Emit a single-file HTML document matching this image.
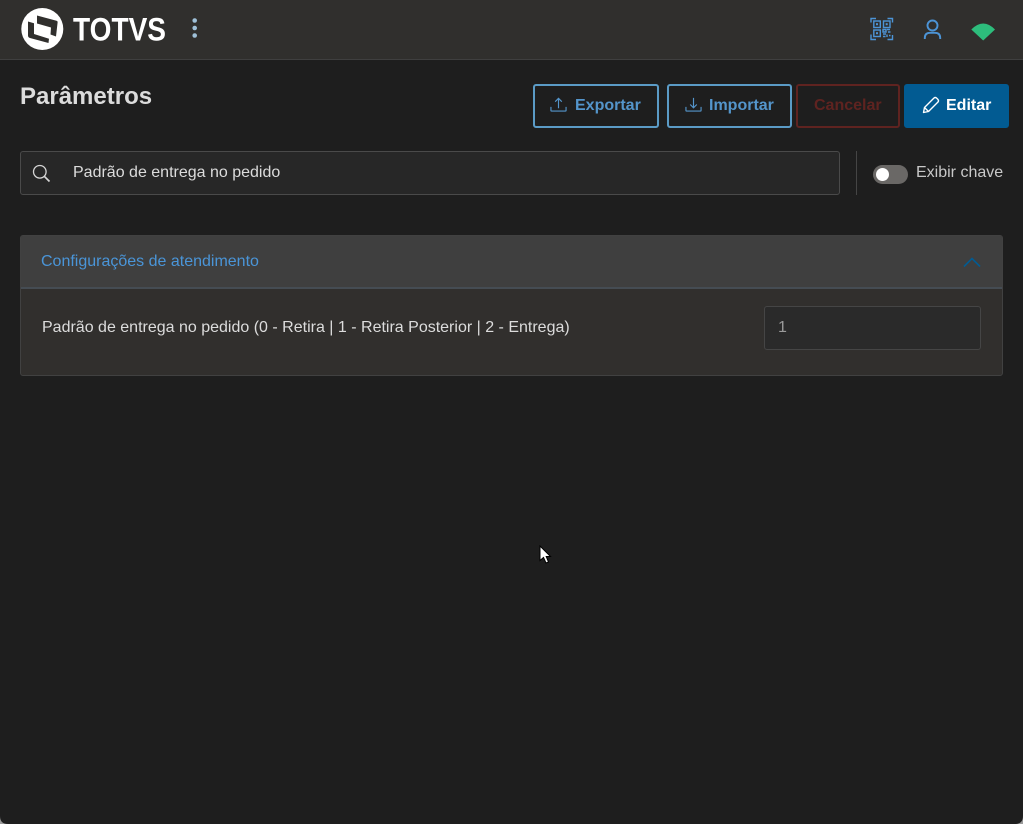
<!DOCTYPE html>
<html lang="pt-BR">
<head>
<meta charset="utf-8">
<title>Parâmetros</title>
<style>
*{box-sizing:border-box}
html,body{margin:0;padding:0;width:1023px;height:824px;overflow:hidden;background:#1e1e1e;font-family:"Liberation Sans",sans-serif}
.abs{position:absolute}
#top{left:0;top:0;width:1023px;height:60px;background:#302f2d;border-bottom:1px solid #3f3f3f}
.btn{position:absolute;top:84px;height:44px;border-radius:3px;border:2px solid #5b9bc6;font-size:16px;font-weight:700;color:#5495cb;line-height:40px;white-space:nowrap}
.btn span{position:absolute;top:0}
.btn svg{position:absolute}
</style>
</head>
<body>
<div id="top" class="abs"></div>

<svg class="abs" style="left:20px;top:7px" width="46" height="44" viewBox="0 0 46 44">
  <circle cx="22.300" cy="22" r="21" fill="#fff"/>
  <path d="M17 8.500L36.500 13.800Q37.800 14.200 37.600 15.500L36 29.500L30.500 27.500L31 20.500L17 16.500Z" fill="#302f2d"/>
  <path d="M8 14.500L14 16.300V27L29 31.800L28.500 36L10 31Q8 30.500 8 28.500Z" fill="#302f2d"/>
</svg>
<svg class="abs" style="left:70px;top:10px" width="100" height="38" viewBox="0 0 100 38">
  <text x="3" y="30.500" font-family="Liberation Sans" font-weight="700" font-size="32" fill="#fff" textLength="93" lengthAdjust="spacingAndGlyphs">TOTVS</text>
</svg>
<svg class="abs" style="left:190px;top:17px" width="10" height="24" viewBox="0 0 10 24">
  <circle cx="4.700" cy="3.500" r="2.300" fill="#9fc0d8"/>
  <circle cx="4.700" cy="11" r="2.300" fill="#9fc0d8"/>
  <circle cx="4.700" cy="18.500" r="2.300" fill="#9fc0d8"/>
</svg>

<svg class="abs" style="left:870px;top:17px" width="24" height="24" viewBox="0 0 24 24" fill="none" stroke="#4c94d6" stroke-width="1.400">
  <path d="M1 5.500V1.500H6M17.500 1.500H22.500V5.500M1 17.500V22.500H6M17.500 22.500H22.500V18"/>
  <rect x="3.800" y="4" width="6.500" height="6.500"/><rect x="6" y="6.200" width="2" height="2" fill="#4c94d6" stroke="none"/>
  <rect x="13.500" y="4" width="6.500" height="6.500"/><rect x="15.700" y="6.200" width="2" height="2" fill="#4c94d6" stroke="none"/>
  <rect x="3.800" y="13" width="6.500" height="6.500"/><rect x="6" y="15.200" width="2" height="2" fill="#4c94d6" stroke="none"/>
  <path d="M13 12.500H16V15H13ZM17 12.500H20M18 15H20.500M13 17H16M17 17.500V20M13 19.500H15.500M19 18.500H20.500"/>
</svg>
<svg class="abs" style="left:922px;top:18px" width="22" height="23" viewBox="0 0 22 23" fill="none" stroke="#4c94d6" stroke-width="1.900">
  <circle cx="10.500" cy="7.500" r="5"/>
  <path d="M2.800 21V20Q2.800 14.800 8 14.800H13Q18.200 14.800 18.200 20V21"/>
</svg>
<svg class="abs" style="left:970px;top:21px" width="26" height="20" viewBox="0 0 26 20">
  <path d="M1.300 8.500Q13.300 -3.500 25 8.500L13.200 19.500Z" fill="#2dbd7c"/>
</svg>

<div class="abs" style="left:20px;top:83px;font-size:24px;font-weight:700;color:#dcdcdc;line-height:28px">Parâmetros</div>

<div class="btn" style="left:533px;width:126px">
  <svg style="left:15px;top:10px" width="17" height="17" viewBox="0 0 18 18" fill="none" stroke="#5495cb" stroke-width="1.200"><path d="M1 11.500V15.500Q1 16 1.500 16H16.500Q17 16 17 15.500V11.500M9 13V2.500M5.500 6L9 2.500L12.500 6"/></svg>
  <span style="left:40px">Exportar</span>
</div>
<div class="btn" style="left:667px;width:125px">
  <svg style="left:16px;top:10px" width="17" height="17" viewBox="0 0 18 18" fill="none" stroke="#5495cb" stroke-width="1.200"><path d="M1 11.500V15.500Q1 16 1.500 16H16.500Q17 16 17 15.500V11.500M9 2V12.500M5.500 9L9 12.500L12.500 9"/></svg>
  <span style="left:40px">Importar</span>
</div>
<div class="btn" style="left:796px;width:104px;border-color:#5f2320;color:#5f2320">
  <span style="left:16px">Cancelar</span>
</div>
<div class="btn" style="left:904px;width:105px;background:#025b92;border-color:#025b92;color:#fff">
  <svg style="left:16px;top:10px" width="18" height="18" viewBox="0 0 18 18" fill="none" stroke="#fff" stroke-width="1.400" stroke-linejoin="round"><path d="M1.500 16.500L2.500 11.500L12 2Q13.200 1 14.500 2L16 3.500Q17 4.800 16 6L6.500 15.500ZM2.500 11.500L6.500 15.500"/></svg>
  <span style="left:40px">Editar</span>
</div>

<div class="abs" style="left:20px;top:151px;width:820px;height:44px;background:#272727;border:1px solid #4a4a4a;border-radius:3px"></div>
<svg class="abs" style="left:32px;top:164px" width="19" height="19" viewBox="0 0 19 19" fill="none" stroke="#d6d6d6" stroke-width="1.300"><circle cx="7.800" cy="7.800" r="6.300"/><path d="M12.300 12.300L17.500 17.500" stroke-width="1.700"/></svg>
<div class="abs" style="left:73px;top:164px;font-size:16px;line-height:18px;color:#dcdcdc">Padrão de entrega no pedido</div>

<div class="abs" style="left:856px;top:151px;width:1px;height:44px;background:#454545"></div>
<div class="abs" style="left:873px;top:165px;width:35px;height:19px;border-radius:10px;background:#6a6866"></div>
<div class="abs" style="left:876px;top:168px;width:13px;height:13px;border-radius:50%;background:#fff"></div>
<div class="abs" style="left:916px;top:164px;font-size:16px;line-height:18px;color:#c8c8c8">Exibir chave</div>

<div class="abs" style="left:20px;top:235px;width:983px;height:141px;background:#312f2d;border:1px solid #414141;border-radius:3px;overflow:hidden">
  <div style="position:absolute;left:0;top:0;width:981px;height:53px;background:#3f3f3f;border-bottom:2px solid #454c53"></div>
</div>
<div class="abs" style="left:41px;top:253px;font-size:16px;line-height:18px;color:#4a95d8">Configurações de atendimento</div>
<svg class="abs" style="left:963px;top:256px" width="18" height="12" viewBox="0 0 18 12" fill="none" stroke="#025b92" stroke-width="1.600"><path d="M1 10.500L9 2.500L17 10.500"/></svg>
<div class="abs" style="left:42px;top:319px;font-size:16px;line-height:18px;color:#dcdcdc">Padrão de entrega no pedido (0 - Retira | 1 - Retira Posterior | 2 - Entrega)</div>
<div class="abs" style="left:764px;top:306px;width:217px;height:44px;background:#2a2a2a;border:1px solid #454545;border-radius:3px"></div>
<div class="abs" style="left:778px;top:319px;font-size:16px;line-height:18px;color:#9a9a9a">1</div>

<svg class="abs" style="left:539px;top:545px" width="13" height="20" viewBox="0 0 13 20">
  <path d="M1 1V15.500L4.500 12.500L7 18L9.500 17L7.200 11.500H11.500Z" fill="#fff" stroke="#000" stroke-width="1"/>
</svg>

<svg class="abs" style="left:0;top:816px" width="8" height="8" viewBox="0 0 8 8"><path d="M0 0Q0 8 8 8H0Z" fill="#9a9a9a"/></svg>
<svg class="abs" style="left:1015px;top:816px" width="8" height="8" viewBox="0 0 8 8"><path d="M8 0Q8 8 0 8H8Z" fill="#9a9a9a"/></svg>
</body>
</html>
